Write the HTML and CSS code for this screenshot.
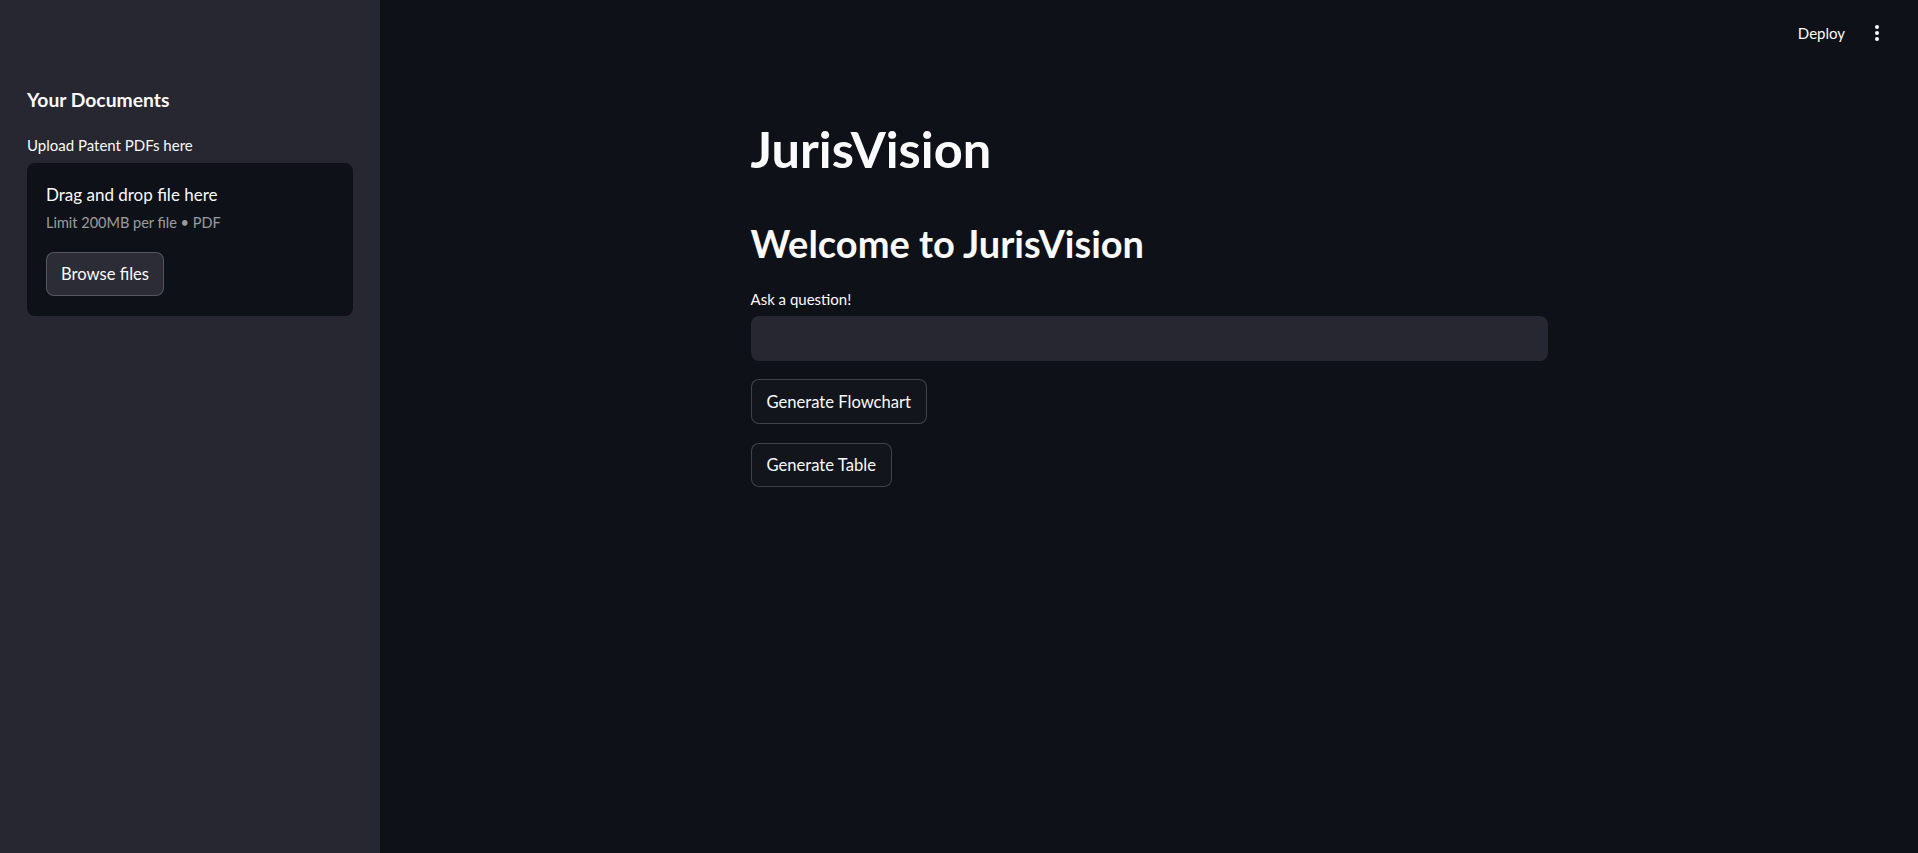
FILE: index.html
```html
<!DOCTYPE html>
<html lang="en">
<head>
<meta charset="utf-8">
<title>JurisVision</title>
<link rel="stylesheet" href="styles.css">
</head>
<body>
<div class="app">
  <aside class="sidebar">
    <h3 class="side-title">Your Documents</h3>
    <div class="side-label">Upload Patent PDFs here</div>
    <div class="dropzone">
      <div class="dz-title">Drag and drop file here</div>
      <div class="dz-sub">Limit 200MB per file • PDF</div>
      <button class="btn btn-browse">Browse files</button>
    </div>
  </aside>
  <main class="main">
    <header class="topbar">
      <span class="deploy">Deploy</span>
      <span class="kebab"><i></i><i></i><i></i></span>
    </header>
    <section class="block">
      <h1 class="title">JurisVision</h1>
      <h2 class="subtitle">Welcome to JurisVision</h2>
      <label class="field-label">Ask a question!</label>
      <div class="text-input"></div>
      <button class="btn btn-secondary btn-flow">Generate Flowchart</button>
      <button class="btn btn-secondary btn-table">Generate Table</button>
    </section>
  </main>
</div>
</body>
</html>
```
FILE: styles.css
```css
* { box-sizing: border-box; }
html, body { margin: 0; padding: 0; }
body {
  background: #0e1117;
  color: #fafafa;
  font-family: Lato, "Liberation Sans", sans-serif;
  width: 1918px;
  height: 853px;
  overflow: hidden;
}
.app { display: flex; height: 853px; }

.sidebar {
  width: 380px;
  flex: none;
  background: #262730;
  padding: 88px 27px 0 27px;
  display: flex;
  flex-direction: column;
  align-items: flex-start;
}
.side-title {
  margin: 0;
  font-size: 19.3px;
  font-weight: 700;
  line-height: 24px;
}
.side-label {
  margin-top: 24px;
  font-size: 15px;
  line-height: 18px;
}
.dropzone {
  margin-top: 9px;
  width: 326px;
  background: #0e1117;
  border-radius: 8px;
  padding: 22px 19px 20px 19px;
  display: flex;
  flex-direction: column;
  align-items: flex-start;
}
.dz-title { font-size: 17px; line-height: 20px; }
.dz-sub {
  margin-top: 9px;
  font-size: 14.5px;
  line-height: 18px;
  color: rgba(250, 250, 250, 0.6);
}
.btn {
  font-family: inherit;
  color: #fafafa;
  font-size: 16.6px;
  white-space: nowrap;
  border: 1px solid rgba(250, 250, 250, 0.2);
  border-radius: 8px;
  padding: 0 14px;
  cursor: pointer;
}
.btn-browse {
  margin-top: 20px;
  height: 44px;
  background: #2b2c36;
}

.main {
  flex: 1;
  display: flex;
  flex-direction: column;
}
.topbar {
  height: 66px;
  display: flex;
  align-items: center;
  justify-content: flex-end;
  padding-right: 39px;
  gap: 30px;
}
.deploy { font-size: 15px; }
.kebab {
  display: flex;
  flex-direction: column;
  gap: 2px;
  width: 4px;
}
.kebab i {
  display: block;
  width: 4px;
  height: 4px;
  border-radius: 50%;
  background: #fafafa;
}
.block {
  width: 797px;
  margin: 0 auto;
  padding-top: 53px;
  display: flex;
  flex-direction: column;
  align-items: flex-start;
}
.title {
  margin: 0;
  font-size: 50.5px;
  font-weight: 700;
  line-height: 60px;
}
.subtitle {
  margin: 41px 0 0 0;
  font-size: 38px;
  font-weight: 700;
  line-height: 46px;
}
.field-label {
  margin-top: 24px;
  font-size: 15px;
  line-height: 18px;
}
.text-input {
  margin-top: 8px;
  width: 100%;
  height: 45px;
  background: #262730;
  border-radius: 8px;
}
.btn-secondary { background: #12151c; padding: 0 15px; }
.btn-flow { margin-top: 18px; height: 45px; }
.btn-table { margin-top: 19px; height: 44px; }
```
